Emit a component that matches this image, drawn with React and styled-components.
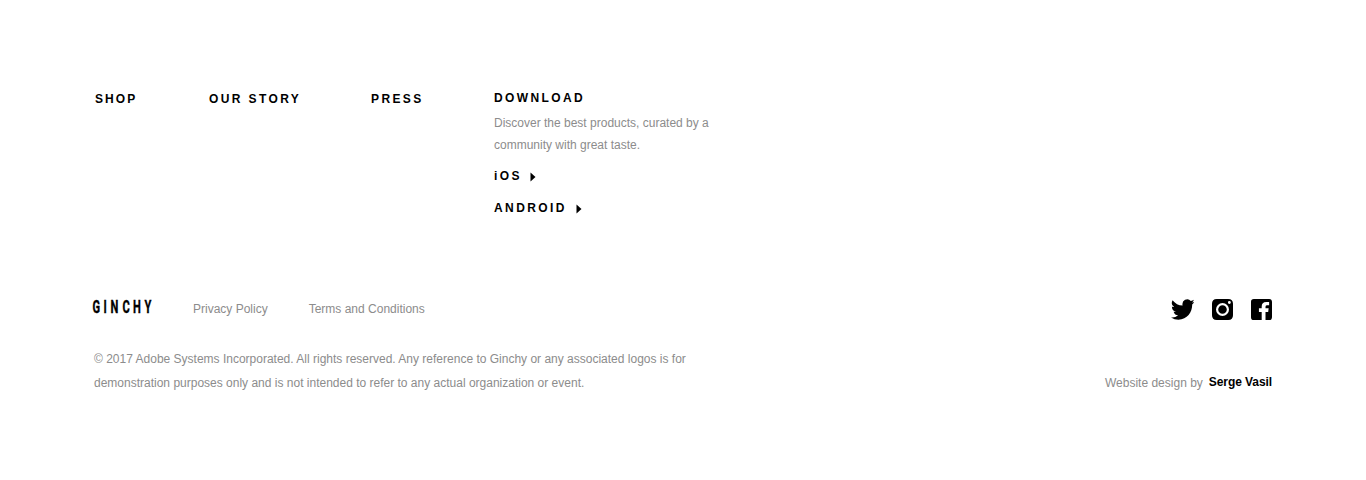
import React from 'react';
import styled, { createGlobalStyle } from 'styled-components';

const Global = createGlobalStyle`
  *, *::before, *::after { box-sizing: border-box; }
  html, body { margin: 0; background: #fff; }
  body { font-family: "Liberation Sans", Arial, sans-serif; font-size: 12px; color: #8c8c8c; }
`;

const Footer = styled.footer`
  display: flex;
  flex-direction: column;
  width: 1366px;
  height: 480px;
  padding: 87px 94px 0 94px;
`;

const Nav = styled.nav`
  display: flex;
  align-items: flex-start;
  height: 204px;
`;

const NavLink = styled.a`
  flex: none;
  width: ${(p) => p.$width}px;
  padding-left: 1px;
  font-size: 12px;
  font-weight: 700;
  line-height: 24px;
  letter-spacing: ${(p) => p.$tracking || 2.4}px;
  color: #000;
`;

const Download = styled.section`
  display: flex;
  flex-direction: column;
`;

const Heading = styled.h2`
  margin: 0;
  font-size: 12px;
  line-height: 22px;
  letter-spacing: 2.4px;
  color: #000;
`;

const Intro = styled.p`
  margin: 3px 0 9px;
  line-height: 22px;
`;

const StoreLink = styled.a`
  display: flex;
  align-items: center;
  height: 22px;
  margin-bottom: 10px;
  gap: ${(p) => p.$gap}px;
  font-weight: 700;
  letter-spacing: 2.4px;
  color: #000;
`;

const Arrow = styled.svg`
  width: 6px;
  height: 10px;
  margin-top: 2px;
`;

const Bar = styled.div`
  display: flex;
  align-items: center;
  height: 35px;
`;

const Logo = styled.svg`
  width: 60px;
  height: 14px;
  margin: -5px 40px 0 -1px;
  overflow: visible;
  font-family: Roboto, sans-serif;
  font-size: 18.5px;
  font-weight: 700;
  fill: #000;
  stroke: #000;
  stroke-width: 0.4px;
`;

const TextLink = styled.a`
  margin-right: 41px;
  line-height: 24px;
`;

const Social = styled.div`
  display: flex;
  gap: 18px;
  margin: 2px 0 0 auto;
`;

const Icon = styled.svg`
  width: ${(p) => p.$width}px;
  height: 21px;
`;

const Bottom = styled.div`
  display: flex;
  justify-content: space-between;
  align-items: flex-end;
  margin-top: 21px;
`;

const Legal = styled.p`
  margin: 0;
  line-height: 24px;
`;

const Credit = styled.p`
  display: flex;
  gap: 6px;
  margin: 0;
  line-height: 24px;
`;

const Author = styled.b`
  line-height: 22px;
  letter-spacing: -0.08px;
  color: #000;
`;

export default function App() {
  return (
    <>
      <Global />
      <Footer>
        <Nav>
          <NavLink $width={114} $tracking={2.1}>SHOP</NavLink>
          <NavLink $width={162}>OUR STORY</NavLink>
          <NavLink $width={124}>PRESS</NavLink>
          <Download>
            <Heading>DOWNLOAD</Heading>
            <Intro>Discover the best products, curated by a<br />community with great taste.</Intro>
            <StoreLink $gap={8}>iOS<Arrow viewBox="0 0 6 10"><path d="M0.5 0.5L5.5 5L0.5 9.5Z" /></Arrow></StoreLink>
            <StoreLink $gap={9}>ANDROID<Arrow viewBox="0 0 6 10"><path d="M0.5 0.5L5.5 5L0.5 9.5Z" /></Arrow></StoreLink>
          </Download>
        </Nav>
        <Bar>
          <Logo viewBox="0 0 60 14">
            <text transform="scale(0.6 1)" y="13.6" x="-0.8 17.5 29 49 66.5 85.8">GINCHY</text>
          </Logo>
          <TextLink>Privacy Policy</TextLink>
          <TextLink>Terms and Conditions</TextLink>
          <Social>
            <Icon $width={23} viewBox="0 2 23.4 20" preserveAspectRatio="none"><path d="M23.95 4.57a10 10 0 0 1-2.82.77 4.96 4.96 0 0 0 2.16-2.72c-.95.55-2 .95-3.13 1.18a4.92 4.92 0 0 0-8.38 4.48A13.9 13.9 0 0 1 1.64 3.16a4.92 4.92 0 0 0 1.52 6.57 4.9 4.9 0 0 1-2.23-.61v.06a4.92 4.92 0 0 0 3.95 4.83 5 5 0 0 1-2.21.08 4.94 4.94 0 0 0 4.6 3.42A9.87 9.87 0 0 1 0 19.54a14 14 0 0 0 7.55 2.21c9.05 0 14-7.5 14-13.98v-.64a9.94 9.94 0 0 0 2.4-2.56Z" overflow="visible" /></Icon>
            <Icon $width={21} viewBox="0 0 22 22"><path fillRule="evenodd" d="M5 0H17Q22 0 22 5V17Q22 22 17 22H5Q0 22 0 17V5Q0 0 5 0ZM11 4.2A6.8 6.8 0 1 0 11 17.8A6.8 6.8 0 1 0 11 4.2ZM11 6.5A4.5 4.5 0 1 1 11 15.5A4.5 4.5 0 1 1 11 6.5ZM18.2 2.2A1.5 1.5 0 1 0 18.2 5.2A1.5 1.5 0 1 0 18.2 2.2Z" /></Icon>
            <Icon $width={21} viewBox="0 0 22 22"><path d="M3 0H19Q22 0 22 3V19Q22 22 19 22H15.2V13.5H18L18.5 9.8H15.2V8Q15.2 6.5 17 6.5H19V3.2H16Q11.2 3.2 11.2 8V9.8H8.3V13.5H11.2V22H3Q0 22 0 19V3Q0 0 3 0Z" /></Icon>
          </Social>
        </Bar>
        <Bottom>
          <Legal>© 2017 Adobe Systems Incorporated. All rights reserved. Any reference to Ginchy or any associated logos is for<br />demonstration purposes only and is not intended to refer to any actual organization or event.</Legal>
          <Credit>Website design by <Author>Serge Vasil</Author></Credit>
        </Bottom>
      </Footer>
    </>
  );
}
